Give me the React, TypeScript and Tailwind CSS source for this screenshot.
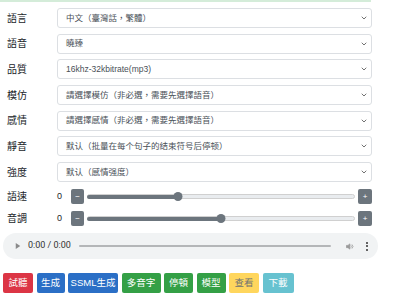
import { ChevronDown } from 'lucide-react';

const selects = [
    { label: '語言', value: '中文（臺灣話，繁體）' },
    { label: '語音', value: '曉臻' },
    { label: '品質', value: '16khz-32kbitrate(mp3)' },
    { label: '模仿', value: '請選擇模仿（非必選，需要先選擇語音）' },
    { label: '感情', value: '請選擇感情（非必選，需要先選擇語音）' },
    { label: '靜音', value: '默认（批量在每个句子的结束符号后停顿）' },
    { label: '強度', value: '默认（感情强度）' },
];

const sliders = [
    { label: '語速', value: 0, pct: 34 },
    { label: '音調', value: 0, pct: 50 },
];

const buttons = [
    { text: '試聽', cls: 'bg-[#dc3545] text-white w-[30px]' },
    { text: '生成', cls: 'bg-[#2b6fc6] text-white w-[28px]' },
    { text: 'SSML生成', cls: 'bg-[#2b6fc6] text-white w-[50px]' },
    { text: '多音字', cls: 'bg-[#34a046] text-white w-[39px]' },
    { text: '停頓', cls: 'bg-[#34a046] text-white w-[29px]' },
    { text: '模型', cls: 'bg-[#34a046] text-white w-[29px]' },
    { text: '查看', cls: 'bg-[#ffc107] text-[#212529] w-[30px] opacity-65' },
    { text: '下載', cls: 'bg-[#17a2b8] text-white w-[31px] opacity-65' },
];

function SliderRow({ label, value, pct }: { label: string; value: number; pct: number }) {
    return (
        <div className="flex items-center h-[15px]">
            <div className="w-[57px] pl-[7px] text-[10px] text-[#212529]">{label}</div>
            <div className="w-[14px] text-[9px] text-[#212529]">{value}</div>
            <button className="w-[13px] h-[15px] rounded-[2px] bg-[#6c757d] text-white text-[8px] leading-none flex items-center justify-center">−</button>
            <div className="flex-1 mx-[3px] relative h-[9px] flex items-center">
                <div className="w-full h-[5px] rounded-full bg-[#e9ecef] border border-[#d0d0d0]" />
                <div className="absolute left-0 h-[4px] rounded-full bg-[#6c757d]" style={{ width: `${pct}%` }} />
                <div
                    className="absolute w-[9px] h-[9px] rounded-full bg-[#6c757d] -translate-x-1/2"
                    style={{ left: `${pct}%` }}
                />
            </div>
            <button className="w-[14px] h-[15px] rounded-[2px] bg-[#6c757d] text-white text-[8px] leading-none flex items-center justify-center">+</button>
        </div>
    );
}

export default function App() {
    return (
        <div className="w-[393px] h-[300px] bg-white overflow-hidden font-['Liberation_Sans','Noto_Sans_CJK_TC',sans-serif]">
            {/* Top border from the box above */}
            <div className="w-[371px] h-[2px] bg-[#d4ecd9]" />

            <div className="pr-[21px] pt-[6px] flex flex-col gap-[5.7px]">
                {selects.map((s) => (
                    <div key={s.label} className="flex items-center">
                        <div className="w-[57px] pl-[7px] text-[10px] text-[#212529]">{s.label}</div>
                        <div className="flex-1 h-[20px] border border-[#dcdfe3] rounded-[3px] flex items-center justify-between pl-[8px] pr-[3px]">
                            <span className="text-[8.5px] text-[#495057] whitespace-nowrap">{s.value}</span>
                            <ChevronDown className="w-[8px] h-[8px] text-[#555]" strokeWidth={2.5} />
                        </div>
                    </div>
                ))}
            </div>

            <div className="pr-[21px] mt-[7px] flex flex-col gap-[7px]">
                {sliders.map((s) => (
                    <SliderRow key={s.label} {...s} />
                ))}
            </div>

            {/* Audio player */}
            <div className="mt-[7px] ml-[3px] w-[375px] h-[26px] rounded-full bg-[#f1f3f4] flex items-center pl-[12px] pr-[10px]">
                <svg viewBox="0 0 8 8" className="w-[6px] h-[6px] text-[#8a8a8a]">
                    <path d="M1 0 L7 4 L1 8 Z" fill="currentColor" />
                </svg>
                <span className="ml-[7px] text-[9px] text-[#333] font-['Roboto',sans-serif]">0:00 / 0:00</span>
                <div className="flex-1 ml-[8px] mr-[14px] h-[2px] rounded-full bg-[#b4b6b8]" />
                <svg viewBox="0 0 24 24" className="w-[9px] h-[9px] text-[#9a9a9a]" fill="none" stroke="currentColor" strokeWidth={2}>
                    <path d="M4 9h4l5-4v14l-5-4H4z" fill="currentColor" />
                    <path d="M16 9a4 4 0 0 1 0 6M18.5 6.5a7.5 7.5 0 0 1 0 11" />
                </svg>
                <div className="ml-[12px] flex flex-col gap-[1.5px]">
                    <div className="w-[2px] h-[2px] rounded-full bg-[#333]" />
                    <div className="w-[2px] h-[2px] rounded-full bg-[#333]" />
                    <div className="w-[2px] h-[2px] rounded-full bg-[#333]" />
                </div>
            </div>

            {/* Action buttons */}
            <div className="mt-[14px] ml-[3px] flex gap-[3.5px]">
                {buttons.map((b) => (
                    <button
                        key={b.text}
                        className={`h-[20px] rounded-[2px] text-[9.5px] flex items-center justify-center whitespace-nowrap ${b.cls}`}
                    >
                        {b.text}
                    </button>
                ))}
            </div>
        </div>
    );
}
